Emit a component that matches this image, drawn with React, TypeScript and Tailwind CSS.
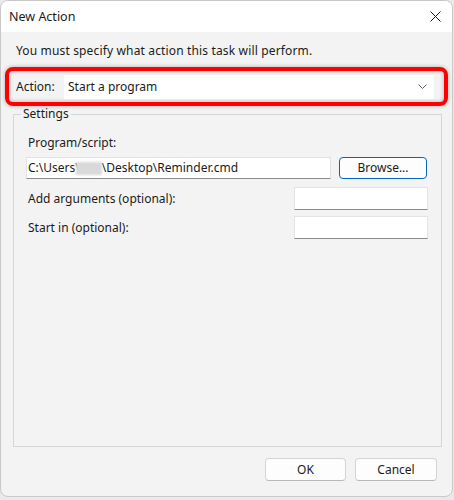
export default function App() {
  return (
    <div className="w-[454px] h-[500px] bg-[#e9e9e9] text-[12px] leading-[16px] text-[#1b1b1b] font-['Noto_Sans',sans-serif]">
      <div className="w-[453px] h-[497px] rounded-[8px] border border-[#c9c9c9] overflow-hidden flex flex-col bg-[#f3f3f3]">
        {/* title bar */}
        <div className="h-[31px] shrink-0 bg-white flex items-center justify-between pl-[8px] pr-[10px]">
          <span className="text-[12.5px]">New Action</span>
          <svg width="11" height="11" viewBox="0 0 11 11" className="mr-[1px]">
            <path d="M0.5 0.5 L10.5 10.5 M10.5 0.5 L0.5 10.5" stroke="#1b1b1b" strokeWidth="1" />
          </svg>
        </div>

        <p className="mt-[11px] ml-[15px] tracking-[0.15px]">You must specify what action this task will perform.</p>

        {/* action row, highlighted */}
        <div className="mt-[8px] ml-[4px] w-[443px] h-[39px] border-[4px] border-[#ff0000] rounded-[8px] shadow-[0_0_4px_rgba(0,0,0,0.3),inset_0_0_4px_rgba(0,0,0,0.3)] flex items-center pl-[7px] pr-[10px]">
          <span className="w-[48px]">Action:</span>
          <div className="flex-1 h-[24px] bg-white flex items-center justify-between pl-[4px] pr-[7px]">
            <span>Start a program</span>
            <svg width="9" height="5" viewBox="0 0 9 5">
              <path d="M0.5 0.5 L4.5 4.5 L8.5 0.5" stroke="#5c5c5c" strokeWidth="1" fill="none" />
            </svg>
          </div>
        </div>

        {/* settings group */}
        <fieldset className="ml-[12px] w-[429px] h-[341px] border border-[#d6d6d6]">
          <legend className="ml-[7px] px-[2px]">Settings</legend>

          <p className="mt-[13px] ml-[14px]">Program/script:</p>
          <div className="mt-[6px] ml-[12px] flex gap-[8px]">
            <div className="w-[305px] h-[22px] bg-white border border-[#e3e3e3] border-b-[#8a8a8a] flex items-center pl-[1px]">
              <span>C:\Users\</span>
              <span className="w-[26px] h-[13px] -ml-[4px] bg-[#d9d9d9] blur-[1px]" />
              <span>\Desktop\Reminder.cmd</span>
            </div>
            <button className="w-[88px] h-[22px] bg-[#fdfdfd] border border-[#0067c0] rounded-[4px]">Browse...</button>
          </div>

          <div className="mt-[8px] ml-[14px] mr-[13px] flex items-center justify-between">
            <span>Add arguments (optional):</span>
            <div className="w-[134px] h-[23px] bg-white border border-[#e3e3e3] border-b-[#8a8a8a]" />
          </div>
          <div className="mt-[6px] ml-[14px] mr-[13px] flex items-center justify-between">
            <span>Start in (optional):</span>
            <div className="w-[134px] h-[23px] bg-white border border-[#e3e3e3] border-b-[#8a8a8a]" />
          </div>
        </fieldset>

        {/* buttons */}
        <div className="mt-[11px] mr-[15px] flex justify-end gap-[9px]">
          <button className="w-[81px] h-[23px] bg-[#fdfdfd] border border-[#d4d4d4] border-b-[#b8b8b8] rounded-[4px]">OK</button>
          <button className="w-[82px] h-[23px] bg-[#fdfdfd] border border-[#d4d4d4] border-b-[#b8b8b8] rounded-[4px]">Cancel</button>
        </div>
      </div>
    </div>
  );
}
